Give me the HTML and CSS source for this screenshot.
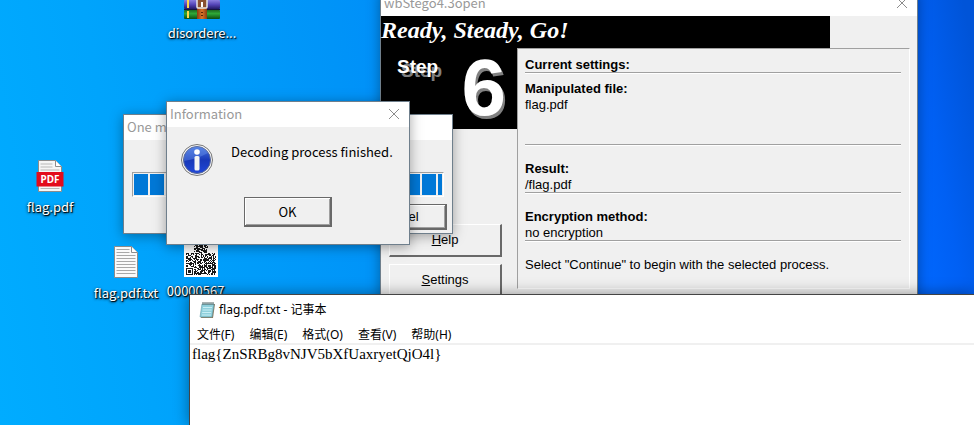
FILE: index.html
```
<!DOCTYPE html>
<html lang="zh-CN">
<head>
<meta charset="utf-8">
<title>Desktop</title>
<link rel="stylesheet" href="styles.css">
</head>
<body>
<main class="desktop">
  <a class="shortcut shortcut-rar" href="#">
    <svg class="shortcut-icon" width="36" height="34" viewBox="0 0 36 34" aria-hidden="true">
      <defs>
        <linearGradient id="purple" x2="0" y2="1"><stop stop-color="#8a7fe0"/><stop offset=".5" stop-color="#5546b8"/><stop offset="1" stop-color="#241a66"/></linearGradient>
        <linearGradient id="green" x2="0" y2="1"><stop stop-color="#1c6a22"/><stop offset=".4" stop-color="#2fa838"/><stop offset="1" stop-color="#0b4d14"/></linearGradient>
        <linearGradient id="belt"><stop stop-color="#8a3c10"/><stop offset=".5" stop-color="#dc7428"/><stop offset="1" stop-color="#8a3c10"/></linearGradient>
      </defs>
      <rect y="5" width="36" height="10" rx="1" fill="#a02c48"/>
      <rect y="15" width="36" height="9" rx="1" fill="url(#purple)"/>
      <rect y="25" width="36" height="9" rx="1" fill="url(#green)"/>
      <path d="M4 15v8M4 26v7" stroke="#ffd84a" stroke-width="2"/>
      <path d="M0 24.500h36" stroke="#171540"/>
      <rect x="13" y="5" width="10" height="29" fill="url(#belt)"/>
      <rect x="13" y="14" width="10" height="9" rx="1" fill="#8a5030" stroke="#e8e8e8" stroke-width="1.500"/>
      <path d="M18 17v5" stroke="#fff" stroke-width="2"/>
      <path d="M18 27v1M18 30v1" stroke="#5c2408" stroke-width="2"/>
    </svg>
    <span>disordere...</span>
  </a>
  <a class="shortcut shortcut-pdf" href="#">
    <svg class="shortcut-icon" width="28" height="34" viewBox="0 0 28 34" aria-hidden="true">
      <path d="M2.500 1.500h17l6 6v25h-23z" fill="#f6f6f6" stroke="#8c8c8c"/>
      <path d="M19.500 1.500v6h6" fill="#fff" stroke="#8c8c8c"/>
      <path d="M4.500 5h12M4.500 8h12M4.500 11h19M4.500 29.500h19" stroke="#b8b8b8"/>
      <path d="M0.500 13h27v14.500h-27z" fill="#e30b1c"/>
      <text class="pdf-label" x="14" y="23.500" text-anchor="middle">PDF</text>
    </svg>
    <span>flag.pdf</span>
  </a>
  <a class="shortcut shortcut-txt" href="#">
    <svg class="shortcut-icon" width="26" height="34" viewBox="0 0 26 34" aria-hidden="true">
      <path d="M1.500 1.500h17l6 6v25h-23z" fill="#fafafa" stroke="#8c8c8c"/>
      <path d="M18.500 1.500v6h6" fill="#fff" stroke="#8c8c8c"/>
      <path d="M3.500 4.500h13M3.500 7.500h13M3.500 10.500h19M3.500 13.500h19M3.500 16.500h19M3.500 19.500h19M3.500 22.500h19M3.500 25.500h19M3.500 28.500h19" stroke="#a8a8a8"/>
    </svg>
    <span>flag.pdf.txt</span>
  </a>
  <a class="shortcut shortcut-qr" href="#">
    <svg class="shortcut-icon" width="34" height="38" viewBox="0 0 34 38" aria-hidden="true">
      <path d="M0 0h34v38H0z" fill="#fff"/>
      <path id="modules" fill="#1a1a1a"/>
    </svg>
    <span>00000567...</span>
  </a>

  <section class="window stego">
    <header class="titlebar">
      <h2>wbStego4.3open</h2>
      <button class="close" aria-label="Close"><svg width="12" height="12" viewBox="0 0 12 12"><path d="M1 1l10 10M11 1L1 11"/></svg></button>
    </header>
    <h1 class="banner">Ready, Steady, Go!</h1>
    <div class="stego-body">
      <div class="side">
        <div class="step"><span class="step-word">Step</span><span class="step-number">6</span></div>
        <div class="side-buttons">
          <button class="raised"><u>H</u>elp</button>
          <button class="raised"><u>S</u>ettings</button>
        </div>
      </div>
      <div class="panel">
        <h3>Current settings:</h3>
        <hr>
        <h3 class="first">Manipulated file:</h3>
        <p class="tall">flag.pdf</p>
        <hr>
        <h3>Result:</h3>
        <p>/flag.pdf</p>
        <hr>
        <h3>Encryption method:</h3>
        <p>no encryption</p>
        <hr>
        <p class="hint">Select "Continue" to begin with the selected process.</p>
      </div>
    </div>
  </section>

  <section class="window wait">
    <header class="titlebar"><h2>One m</h2></header>
    <div class="wait-body">
      <progress value="100" max="100" aria-label="Decoding"></progress>
      <button class="raised strong">Cancel</button>
    </div>
  </section>

  <section class="window info" role="dialog" aria-label="Information">
    <header class="titlebar">
      <h2>Information</h2>
      <button class="close" aria-label="Close"><svg width="12" height="12" viewBox="0 0 12 12"><path d="M1 1l10 10M11 1L1 11"/></svg></button>
    </header>
    <div class="info-body">
      <div class="message">
        <svg width="32" height="32" viewBox="0 0 32 32" aria-hidden="true">
          <defs><linearGradient id="ball" x2="0" y2="1"><stop stop-color="#4a78e0"/><stop offset=".5" stop-color="#1838b8"/><stop offset="1" stop-color="#2048d8"/></linearGradient></defs>
          <circle cx="16" cy="16" r="15.500" fill="#f4f4f4" stroke="#777"/>
          <circle cx="16" cy="16" r="13.500" fill="url(#ball)" stroke="#5a6a98"/>
          <path d="M3 17A13 13 0 0 1 27 9Q16 15 3 17z" fill="#6f98ee" opacity=".4"/>
          <circle cx="16" cy="8" r="2.800" fill="#fff"/>
          <rect x="13.500" y="12" width="5" height="14.500" rx="1.500" fill="#f4f4f4"/>
        </svg>
        <p>Decoding process finished.</p>
      </div>
      <button class="raised strong">OK</button>
    </div>
  </section>

  <section class="notepad">
    <header class="notepad-title">
      <svg width="16" height="16" viewBox="0 0 16 16" aria-hidden="true">
        <path d="M4 2h12l-2 14H2z" fill="#8a7a60"/>
        <path d="M3 2h12l-2 13H1z" fill="#8fd0dc" stroke="#5f9aa6" stroke-width=".6"/>
        <path d="M4 5.500h9M3.600 8h9M3.200 10.500h9M3 13h9" stroke="#c8eef4"/>
        <path d="M4 0v3M6 0v3M8 0v3M10 0v3M12 0v3M14 0v3" stroke="#566" stroke-width="1"/>
      </svg>
      <h2>flag.pdf.txt - 记事本</h2>
    </header>
    <nav class="menu">
      <button>文件(F)</button><button>编辑(E)</button><button>格式(O)</button><button>查看(V)</button><button>帮助(H)</button>
    </nav>
    <textarea class="editor" aria-label="文本" spellcheck="false">flag{ZnSRBg8vNJV5bXfUaxryetQjO4l}</textarea>
  </section>
</main>
<script src="script.js"></script>
</body>
</html>
```
FILE: styles.css
```
* { box-sizing: border-box; }
body {
  margin: 0;
  font: 13px/16px "Noto Sans CJK SC", "Noto Sans", sans-serif;
}
h1, h2, h3, p { margin: 0; font: inherit; }
button { font: inherit; color: #000; }

.desktop {
  position: relative;
  height: 100vh;
  overflow: hidden;
  background:
    linear-gradient(172deg, transparent 87%, rgba(60, 200, 255, .3) 88%, rgba(0, 150, 235, .35) 89%),
    linear-gradient(80deg, #00acff 0%, #00a4fc 15%, #0094f8 38%, #0068ff 90%, #0060f4 94%, #0054d8 99%);
}

/* Desktop shortcuts */
.shortcut {
  position: absolute;
  display: flex;
  flex-direction: column;
  align-items: center;
  gap: 6px;
  width: 76px;
  color: #fff;
  text-decoration: none;
  text-shadow: 1px 1px 1px #000, 0 1px 3px #000;
}
.shortcut-icon { flex: none; }
.shortcut-rar { left: 164px; top: -15px; }
.shortcut-pdf { left: 12px; top: 159px; }
.shortcut-txt { left: 88px; top: 245px; }
.shortcut-qr { left: 163px; top: 239px; }
.pdf-label {
  font: bold 10px "Noto Sans", sans-serif;
  fill: #fff;
  text-shadow: none;
}

/* Dialog windows */
.window {
  position: absolute;
  border: 1px solid #6f7f8c;
  background: #f0f0f0;
  box-shadow: 0 2px 12px rgba(0, 0, 0, .35);
}
.titlebar {
  display: flex;
  align-items: center;
  justify-content: space-between;
  height: 25px;
  padding: 0 9px 2px 3px;
  background: #fff;
  color: #999;
}
.close {
  display: flex;
  padding: 0;
  border: 0;
  background: none;
}
.close svg {
  fill: none;
  stroke: #8c8c8c;
}
.raised {
  height: 33px;
  border: 1px solid;
  border-color: #fff #696969 #696969 #fff;
  border-right-width: 2px;
  border-bottom-width: 2px;
  background: #f0f0f0;
  padding: 0;
}
.strong {
  border: 1px solid #696969;
  border-right-width: 2px;
  border-bottom-width: 2px;
  box-shadow: inset 1px 1px #fff, inset -1px -1px #a0a0a0;
}

.stego {
  left: 380px;
  right: 56px;
  top: -10px;
  height: 340px;
  font-family: "Liberation Sans", Arial, sans-serif;
}
.stego h2 { font-family: "Noto Sans CJK SC", "Noto Sans", sans-serif; }
.banner {
  margin-right: 87px;
  height: 32px;
  background: #000;
  color: #fff;
  font: italic bold 24px/28px "Liberation Serif", "Times New Roman", serif;
}
.stego-body {
  display: grid;
  grid-template-columns: 136px 1fr;
  padding-right: 7px;
}
.step {
  display: flex;
  justify-content: space-between;
  height: 81px;
  padding: 0 11px 0 16px;
  background: #000;
  color: #fff;
  font-family: "Liberation Sans", Arial, sans-serif;
  font-weight: bold;
}
.step-word {
  font-size: 19px;
  line-height: 38px;
  text-shadow: 4px 4px #808080;
}
.step-number {
  font-size: 80px;
  line-height: 80px;
  text-shadow: 2px 3px #808080;
}
.side-buttons {
  display: grid;
  gap: 7px;
  padding: 95px 15px 0 8px;
}
.panel {
  height: 241px;
  padding: 7px 8px 0 7px;
  border: 1px solid;
  border-color: #a0a0a0 #fff #fff #a0a0a0;
}
.panel hr {
  height: 2px;
  margin: 0 0 14px;
  border: 0;
  border-top: 1px solid #a0a0a0;
  border-bottom: 1px solid #fff;
}
.panel h3 { font-weight: bold; }
.panel h3, .panel p {
  height: 16px;
  line-height: 18px;
}
.panel h3 + hr { margin-bottom: 6px; }
.panel .tall { height: 48px; }

.wait {
  left: 123px;
  top: 114px;
  width: 330px;
  height: 120px;
}
.wait-body {
  display: flex;
  flex-direction: column;
  align-items: flex-end;
  gap: 7px;
  padding: 32px 5px 0 8px;
}
.wait progress {
  align-self: stretch;
  height: 25px;
  width: auto;
  margin-right: 3px;
  padding: 1px;
  border: 1px solid;
  border-color: #a0a0a0 #fff #fff #a0a0a0;
  background: #f0f0f0;
  appearance: none;
}
.wait progress::-webkit-progress-bar { background: #f0f0f0; }
.wait progress::-webkit-progress-value {
  background: repeating-linear-gradient(90deg, #0078d7 0 14px, #f0f0f0 14px 16px);
}
.wait .raised {
  width: 104px;
  height: 26px;
  font-family: "Liberation Sans", Arial, sans-serif;
}

.info {
  left: 166px;
  top: 101px;
  width: 244px;
  height: 144px;
}
.info-body {
  display: flex;
  flex-direction: column;
  align-items: center;
  gap: 21px;
  padding: 17px 14px 0;
}
.message {
  display: flex;
  align-self: stretch;
  gap: 18px;
}
.message p { white-space: nowrap; }
.info .raised {
  width: 88px;
  height: 30px;
}
.wait .raised { width: 96px; }

/* Notepad */
.notepad {
  position: absolute;
  left: 189px;
  top: 294px;
  right: 0;
  bottom: 0;
  display: flex;
  flex-direction: column;
  border: solid #444;
  border-width: 1px 0 0 1px;
  background: #fff;
  box-shadow: 0 0 14px rgba(0, 0, 0, .4);
  font: 12px/16px "Noto Sans", "Noto Sans CJK SC", sans-serif;
}
.notepad-title {
  display: flex;
  align-items: center;
  gap: 4px;
  height: 30px;
  padding-left: 9px;
}
.menu {
  display: flex;
  gap: 15px;
  height: 20px;
  padding: 1px 0 0 7px;
  border-bottom: 2px solid #f0f0f0;
}
.menu button {
  padding: 0;
  border: 0;
  background: none;
}
.editor {
  flex: 1;
  padding: 0 2px;
  border: 0;
  outline: 0;
  resize: none;
  background: #fff;
  color: #000;
  font: 15px/18px "Liberation Serif", "Times New Roman", serif;
}
```
FILE: script.js
```
// Fills the QR thumbnail with one-unit modules from a seeded sequence.
const size = 30;
let seed = 567;
let path = "";
for (let y = 0; y < size + 4; y++) {
  for (let x = 0; x < size; x++) {
    seed = (seed * 1103515245 + 12345) % 2147483648;
    const inFinder = x < 8 && y > 25 || (x < 8 || x > 21) && y < 12;
    if (!inFinder && seed / 2147483648 > 0.42) {
      path += `M${x + 2} ${y + 2}h1v1h-1z`;
    }
  }
}
path += "M2 29h7v1h-7zM2 35h7v1h-7zM2 30h1v5h-1zM8 30h1v5h-1zM4 31h3v3h-3z";
document.getElementById("modules").setAttribute("d", path);
```
